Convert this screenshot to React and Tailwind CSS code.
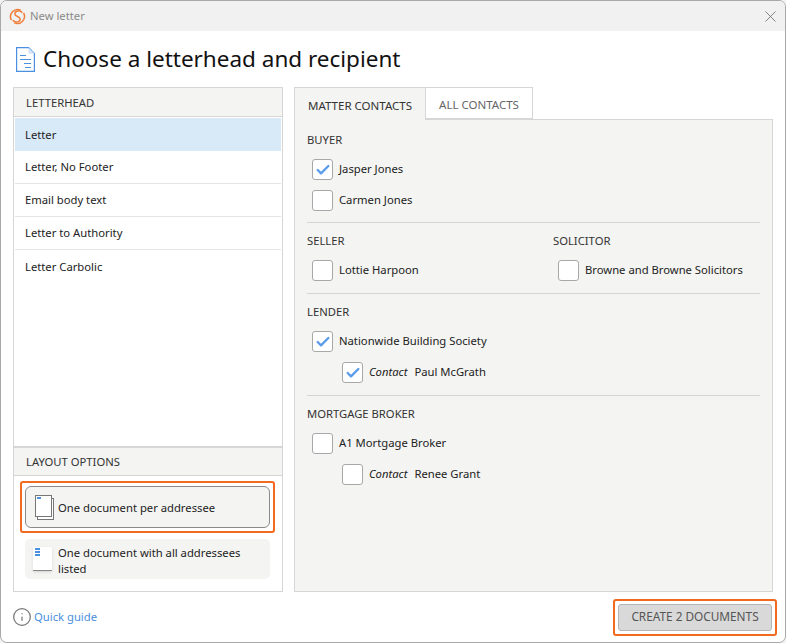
import React from 'react'
import { Check, X, Info } from 'lucide-react'

const CheckBox = ({ checked }) => (
  <span className="flex h-[21px] w-[21px] shrink-0 items-center justify-center rounded-[3px] border border-[#a8a8a8] bg-white">
    {checked && <Check size={16} strokeWidth={3.5} className="text-[#5a9bea]" />}
  </span>
)

const ContactRow = ({ name, checked, sub }) => (
  <div className={`flex h-[31px] items-center ${sub ? 'pl-[35px]' : 'pl-[5px]'}`}>
    <CheckBox checked={checked} />
    <span className="ml-[6px] text-[11.25px] text-[#222]">
      {sub && <i className="mr-[7px]">Contact</i>}
      {name}
    </span>
  </div>
)

const GroupTitle = ({ children }) => (
  <div className="h-[24px] text-[11.25px] leading-[20px] text-[#333]">{children}</div>
)

const Divider = () => <div className="mb-[8px] mt-[7px] h-px bg-[#d4d4d4]" />

const letterheads = ['Letter', 'Letter, No Footer', 'Email body text', 'Letter to Authority', 'Letter Carbolic']

export default function App() {
  return (
    <div className="h-[643px] w-[786px] overflow-hidden bg-[#f2f2f2] font-['Noto_Sans','Open_Sans',sans-serif]">
      <div className="flex h-[643px] w-[786px] flex-col overflow-hidden rounded-[7px] border border-[#a8a8a8] bg-white">
        {/* Title bar */}
        <div className="flex h-[30px] shrink-0 items-center bg-[#f1f1f1] pl-[8px] pr-[5px]">
          <svg width="17" height="17" viewBox="0 0 16 16" fill="none" stroke="#f07f3c" strokeWidth="1.4">
            <path d="M11 2A6.800 6.800 0 0 0 2.300 11.500" />
            <path d="M5 14A6.800 6.800 0 0 0 13.700 4.500" />
            <path d="M12.500 4.500C10.500 1.500 5.500 2.500 5.500 5.500C5.500 8.500 10.500 7.500 10.500 10.500C10.500 13.500 5.500 14 3.500 11.500" />
          </svg>
          <span className="ml-[4px] text-[11.25px] text-[#8a8a8a]">New letter</span>
          <X size={19} strokeWidth={1} className="ml-auto text-[#666]" />
        </div>

        {/* Heading */}
        <div className="flex h-[56px] shrink-0 items-center pl-[15px]">
          <svg width="19" height="25" viewBox="0 0 19 25" fill="none" stroke="#4a8fe0" strokeWidth="1.2">
            <path d="M.6.600h12l5.800 5.800v18h-17.800z" />
            <path d="M12.600.600v5.800h5.800z" fill="#cfe2f8" stroke="none" />
            <path d="M4 8.500h6M4 12.500h11M8 16.500h7M9 20.500h6" />
          </svg>
          <h1 className="ml-[8px] text-[22.5px] leading-[30px] text-[#111]">Choose a letterhead and recipient</h1>
        </div>

        <div className="flex h-[505px] shrink-0 pl-[12px]">
          {/* Left column */}
          <div className="flex w-[270px] flex-col border border-[#d6d6d6]">
            <div className="flex h-[29px] shrink-0 items-center border-b border-[#d6d6d6] bg-[#f4f4f2] pl-[12px] pt-[2px] text-[11.25px] text-[#333]">
              LETTERHEAD
            </div>
            <div className="flex-1 p-px">
              {letterheads.map((item, i) => (
                <div
                  key={item}
                  className={`flex h-[33px] items-center pl-[10px] pt-px text-[11.25px] text-[#222] ${i === 0 ? 'bg-[#d8e9f7]' : ''} ${i > 0 && i < 4 ? 'border-b border-[#e6e6e6]' : ''}`}
                >
                  {item}
                </div>
              ))}
            </div>
            <div className="flex h-[30px] shrink-0 items-center border-y border-t-2 border-[#d6d6d6] bg-[#f4f4f2] pl-[12px] pt-[2px] text-[11.25px] text-[#333]">
              LAYOUT OPTIONS
            </div>
            <div className="h-[115px] shrink-0 pl-[6px] pt-[5px]">
              <div className="h-[52px] w-[255px] rounded-[3px] border-2 border-[#f26a1e] p-[3px]">
                <div className="flex h-[42px] items-center rounded-[6px] border border-[#8a8a8a] bg-[#f4f4f2] pl-[9px] pt-[3px] text-[11.25px] text-[#222]">
                  <span className="relative mr-[4px] -mt-[3px] h-[24px] w-[19px] shrink-0">
                    <span className="absolute left-[2px] top-[3px] h-[22px] w-[17px] border border-[#777] bg-white" />
                    <span className="absolute left-0 top-0 h-[22px] w-[17px] border border-[#777] bg-white" />
                    <span className="absolute left-[2px] top-[2px] h-[2px] w-[4px] bg-[#4a8fe0]" />
                  </span>
                  One document per addressee
                </div>
              </div>
              <div className="ml-[5px] mt-[6px] flex h-[40px] w-[245px] items-center rounded-[5px] bg-[#f4f4f2] pl-[8px] pr-[10px] pt-[3px] text-[11.25px] leading-[16px] text-[#222]">
                <span className="relative mr-[6px] -mt-[3px] h-[24px] w-[19px] shrink-0 border-b border-[#888] bg-white shadow-sm">
                  <span className="absolute left-[2px] top-[1px] h-[2px] w-[5px] bg-[#4a8fe0]" />
                  <span className="absolute left-[2px] top-[4px] h-[2px] w-[5px] bg-[#4a8fe0]" />
                  <span className="absolute left-[2px] top-[7px] h-[2px] w-[5px] bg-[#4a8fe0]" />
                </span>
                One document with all addressees listed
              </div>
            </div>
          </div>

          {/* Right column */}
          <div className="ml-[11px] flex w-[479px] flex-col">
            <div className="relative z-10 flex h-[32px] shrink-0 text-[11.5px]">
              <div className="flex h-[33px] w-[132px] items-center justify-center border border-b-0 border-[#d6d6d6] bg-[#f4f4f2] pt-[3px] text-[#333]">
                MATTER CONTACTS
              </div>
              <div className="flex w-[107px] items-center justify-center border-y border-r border-[#d6d6d6] pt-[3px] text-[#666]">
                ALL CONTACTS
              </div>
            </div>
            <div className="flex-1 border border-[#d6d6d6] bg-[#f4f4f2] px-[12px] pt-[10px]">
              <GroupTitle>BUYER</GroupTitle>
              <ContactRow name="Jasper Jones" checked />
              <ContactRow name="Carmen Jones" />
              <div className="mb-[8px] mt-[6px] h-px bg-[#d4d4d4]" />
              <div className="flex">
                <div className="w-[246px]">
                  <GroupTitle>SELLER</GroupTitle>
                  <ContactRow name="Lottie Harpoon" />
                </div>
                <div>
                  <GroupTitle>SOLICITOR</GroupTitle>
                  <ContactRow name="Browne and Browne Solicitors" />
                </div>
              </div>
              <Divider />
              <GroupTitle>LENDER</GroupTitle>
              <ContactRow name="Nationwide Building Society" checked />
              <ContactRow name="Paul McGrath" checked sub />
              <Divider />
              <GroupTitle>MORTGAGE BROKER</GroupTitle>
              <ContactRow name="A1 Mortgage Broker" />
              <ContactRow name="Renee Grant" sub />
            </div>
          </div>
        </div>

        {/* Footer */}
        <div className="flex flex-1 items-center pl-[11px] pr-[8px]">
          <Info size={20} strokeWidth={1.5} className="text-[#777]" />
          <span className="ml-[2px] text-[11.25px] text-[#4a8fe0]">Quick guide</span>
          <div className="ml-auto rounded-[3px] border-2 border-[#f26a1e] p-[3px]">
            <div className="flex h-[27px] w-[154px] items-center justify-center rounded-[3px] border border-[#b5b5b5] bg-[#d9d9d9] text-[11.8px] text-[#555]">
              CREATE 2 DOCUMENTS
            </div>
          </div>
        </div>
      </div>
    </div>
  )
}
